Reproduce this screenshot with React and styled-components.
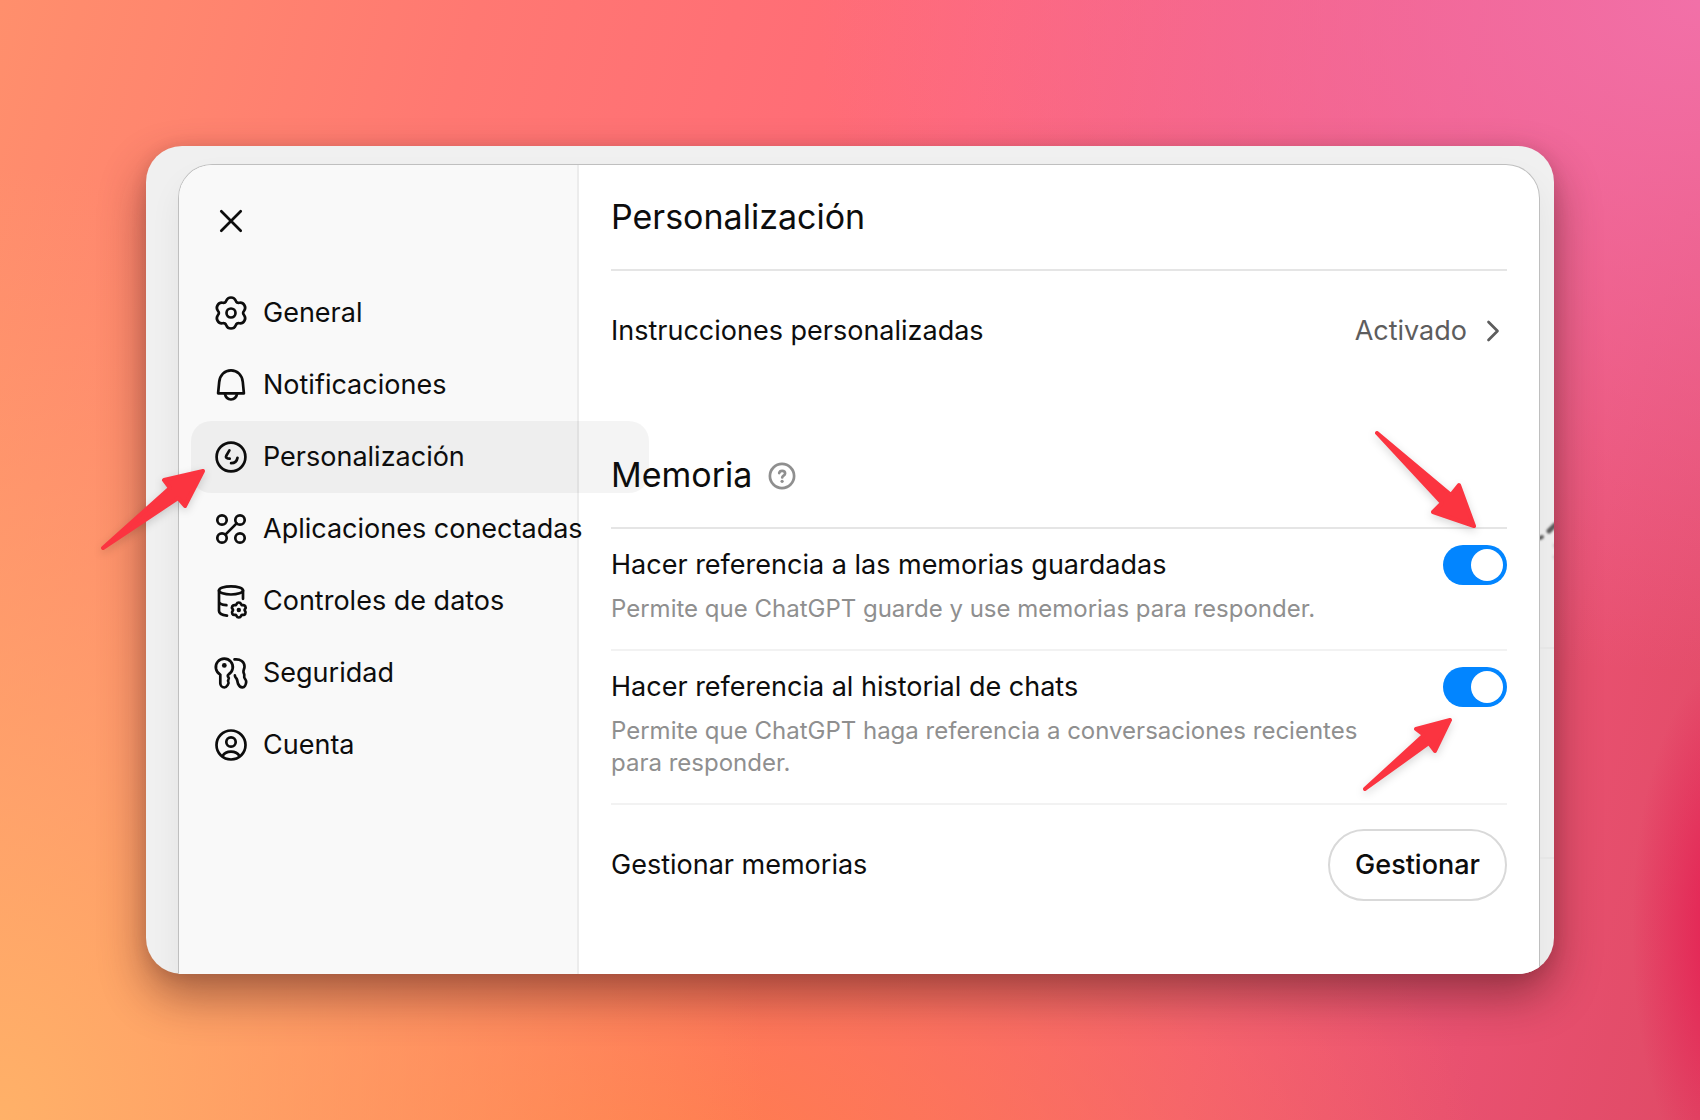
import React, { useState } from 'react';
import styled, { createGlobalStyle } from 'styled-components';

const GlobalStyle = createGlobalStyle`
  * {
    box-sizing: border-box;
  }

  body {
    margin: 0;
    color: #0d0d0d;
    font-family: Inter, 'Liberation Sans', sans-serif;
    font-size: 27px;
    line-height: 40px;
  }

  button {
    font: inherit;
    color: inherit;
    border: none;
    background: none;
    padding: 0;
    cursor: pointer;
  }
`;

const Page = styled.div`
  display: flex;
  min-height: 100vh;
  padding: 146px;
  background:
    radial-gradient(ellipse 6% 24% at 102% 83%, #e5194f 0%, rgba(229, 25, 79, 0) 100%),
    radial-gradient(ellipse 52% 60% at 100% 0%, #f270a8 0%, rgba(242, 112, 168, 0) 100%),
    radial-gradient(ellipse 45% 85% at 0% 100%, #ffb168 0%, rgba(255, 177, 104, 0) 100%),
    radial-gradient(ellipse 50% 50% at 38% 108%, #ff8049 0%, rgba(255, 128, 73, 0) 100%),
    linear-gradient(105deg, #ff8f6c 0%, #ff7872 24%, #ff6878 50%, #f2587a 74%, #e04a66 100%);
`;

const Stage = styled.div`
  position: relative;
  display: flex;
  flex: 1;
  min-width: 0;
`;

const Frame = styled.div`
  display: flex;
  flex: 1;
  min-width: 0;
  padding: 18px 14px 0 32px;
  border-radius: 36px;
  overflow: hidden;
  background: #f0f0f0;
  box-shadow: 0 22px 46px rgba(60, 20, 20, 0.45), 0 2px 16px rgba(60, 20, 20, 0.12);
`;

const Dialog = styled.div`
  display: flex;
  flex: 1;
  min-width: 0;
  border: 1px solid #bfbfbf;
  border-bottom: none;
  border-radius: 34px 34px 0 0;
  background: #fff;
  box-shadow: 0 16px 32px rgba(0, 0, 0, 0.06);
`;

const Sidebar = styled.aside`
  flex: none;
  width: 400px;
  padding-left: 12px;
  border-right: 2px solid #ececec;
  border-top-left-radius: 33px;
  background: #f9f9f9;
`;

const SidebarTop = styled.div`
  display: flex;
  align-items: center;
  height: 112px;
  padding-left: 22px;
`;

const IconButton = styled.button`
  display: flex;
`;

const Nav = styled.nav`
  display: flex;
  flex-direction: column;
`;

// The rows are wider than the sidebar and run on under the panel
const NavItem = styled.button`
  display: flex;
  align-items: center;
  gap: 14px;
  width: calc(100% + 72px);
  height: 72px;
  padding: 0 22px;
  border-radius: 20px;
  white-space: nowrap;
  background: ${({ $active }) => ($active ? 'rgba(0, 0, 0, 0.045)' : 'none')};
`;

const Icon = styled.svg`
  flex: none;
  width: 36px;
  height: 36px;
  fill: none;
  stroke: currentColor;
  stroke-width: 2.7;
  stroke-linecap: round;
  stroke-linejoin: round;

  .dot {
    fill: currentColor;
    stroke: none;
  }
`;

const NarrowIcon = styled(Icon)`
  width: 32px;
`;

const Panel = styled.main`
  flex: 1;
  min-width: 0;
  padding: 0 32px 73px;
`;

const Heading = styled.h2`
  display: flex;
  align-items: center;
  gap: 12px;
  height: 106px;
  margin: 0;
  border-bottom: 2px solid #e5e5e5;
  font-size: 34px;
  font-weight: 400;
`;

const HelpButton = styled(IconButton)`
  color: #8f8f8f;
`;

const LinkRow = styled.div`
  display: flex;
  align-items: center;
  justify-content: space-between;
  height: 120px;
  margin-bottom: 32px;
`;

const ValueButton = styled.button`
  display: flex;
  align-items: center;
  gap: 8px;
  color: #5d5d5d;
`;

const SettingRow = styled.div`
  display: flex;
  align-items: flex-start;
  justify-content: space-between;
  gap: 72px;
  padding: 16px 0 24px;
  border-bottom: 2px solid #f2f2f2;
`;

const SettingTitle = styled.label`
  display: block;
  margin-bottom: 8px;
`;

const Description = styled.p`
  margin: 0;
  color: #8f8f8f;
  font-size: 24px;
  line-height: 32px;
`;

const Switch = styled.input`
  appearance: none;
  flex: none;
  width: 64px;
  height: 40px;
  margin: 0;
  padding: 4px;
  border-radius: 20px;
  background: ${({ checked }) => (checked ? '#0285ff' : '#d0d0d0')};
  cursor: pointer;

  &::before {
    content: '';
    display: block;
    width: 32px;
    height: 32px;
    margin-left: ${({ checked }) => (checked ? '24px' : '0')};
    border-radius: 50%;
    background: #fff;
  }
`;

const ActionRow = styled.div`
  display: flex;
  align-items: center;
  justify-content: space-between;
  padding-top: 24px;
`;

const OutlineButton = styled.button`
  && {
    height: 72px;
    padding: 0 25px;
    border: 2px solid #d9d9d9;
    border-radius: 36px;
    font-weight: 500;
  }
`;

const Arrow = styled.svg`
  position: absolute;
  overflow: visible;
  pointer-events: none;
  fill: #fb3440;
  stroke: #fb3440;
  stroke-width: 4;
  stroke-linejoin: round;
  filter: drop-shadow(0 3px 4px rgba(0, 0, 0, 0.16));
`;

const NavArrow = styled(Arrow)`
  top: 314px;
  left: -54px;
`;

const SavedArrow = styled(Arrow)`
  top: 276px;
  right: 67px;
`;

const HistoryArrow = styled(Arrow)`
  top: 562px;
  right: 91px;
`;

// Blurred sliver of the page that shows at the right of the dialog
const Backdrop = styled.svg`
  position: absolute;
  top: 370px;
  right: 0;
`;

// Closed six-lobed outline, one lobe pointing up
const gearPath = (cx, cy, inner, outer) => {
  const point = (r, deg, t = 0) => {
    const a = (deg * Math.PI) / 180;
    const x = cx + r * Math.sin(a) + t * Math.cos(a);
    const y = cy - r * Math.cos(a) + t * Math.sin(a);
    return `${x.toFixed(2)} ${y.toFixed(2)}`;
  };
  const tip = outer * 0.34;
  const dip = outer * 0.16;
  let path = `M${point(outer, 0)}`;
  for (let deg = 0; deg < 360; deg += 60) {
    path += `C${point(outer, deg, tip)} ${point(inner, deg + 30, -dip)} ${point(inner, deg + 30)}`;
    path += `C${point(inner, deg + 30, dip)} ${point(outer, deg + 60, -tip)} ${point(outer, deg + 60)}`;
  }
  return `${path}Z`;
};

const GearIcon = () => (
  <Icon viewBox="0 0 36 36">
    <path d={gearPath(18, 18, 12.1, 15.5)} />
    <circle cx="18" cy="18" r="4.5" />
  </Icon>
);

const BellIcon = () => (
  <Icon viewBox="0 0 36 36">
    <path d="M5.1 26.3 6.2 15C6.8 8.2 11.6 3.4 18 3.4S29.2 8.2 29.8 15l1.1 11.3Z" />
    <path d="M11.8 26.6c.7 3.6 3 5.9 6.2 5.9s5.5-2.3 6.2-5.9" />
  </Icon>
);

const DialIcon = () => (
  <Icon viewBox="0 0 36 36">
    <circle cx="18" cy="18" r="14.4" />
    <path d="m16.4 11.3-3 5.2c-.9 1.6-.4 2.6 1.3 2.9l2 .3" />
    <path d="M24.5 18.8c-.5 3.2-2.9 5.4-6.4 5.4" />
  </Icon>
);

const AppsIcon = () => (
  <Icon viewBox="0 0 36 36">
    <circle cx="9" cy="9" r="4.7" />
    <circle cx="27" cy="9" r="4.7" />
    <circle cx="9" cy="27" r="4.7" />
    <circle cx="27" cy="27" r="4.7" />
    <path d="m23.6 12.4-11.2 11.2" />
  </Icon>
);

const DataIcon = () => (
  <Icon viewBox="0 0 36 36">
    <ellipse cx="18" cy="7.4" rx="12" ry="4.1" />
    <path d="M6 7.4V28c0 2.4 3.2 4 8 4.6M6 18.4c0 1.8 3 3.2 7.4 3.8M30 7.4v8.4" />
    <path d={gearPath(25.8, 27, 5.8, 7.5)} />
    <circle className="dot" cx="25.8" cy="27" r="2.2" />
  </Icon>
);

const KeysIcon = () => (
  <Icon viewBox="0 0 36 36">
    <path d="M7.3 19.6a8.5 8.5 0 1 1 8.2-.1c-1 .7-.9 1.9-.1 2.7.8.9.7 1.7 0 2.6-.6.8-.5 1.4 0 2.2.7 1-1.5 5.5-4 5.5-2.3 0-4.1-2.2-4.1-4.3Z" />
    <circle className="dot" cx="11.3" cy="10.4" r="2.4" />
    <path d="M21.5 4.4c6-.7 10.1 2.6 10 7.2 0 2.3-1.4 3.6-1 5.6.3 1.6 1.2 2.1.7 4.2-.5 2.2 2.2 3 2 5.5-.2 2.8-1.7 5.600-3.9 5.5-1.9-.1-3.3-1.5-4.2-3.5-.9-2.2-.5-3.500-1.500-5.200-.7-1.100-1.800-1.700-1.700-3.300" />
  </Icon>
);

const AccountIcon = () => (
  <Icon viewBox="0 0 36 36">
    <circle cx="18" cy="18" r="14.5" />
    <circle cx="18" cy="15" r="4.7" />
    <path d="M9.6 29c1.6-2.8 4.6-4.3 8.4-4.3s6.8 1.5 8.4 4.3" />
  </Icon>
);

const CloseIcon = () => (
  <Icon viewBox="0 0 36 36">
    <path d="m8.3 8.3 19.4 19.4M27.7 8.3 8.3 27.7" />
  </Icon>
);

const HelpIcon = () => (
  <Icon viewBox="0 0 36 36">
    <circle cx="18" cy="19" r="12.1" />
    <path d="M15.2 16.1c.3-1.5 1.4-2.3 2.9-2.3 1.7 0 3 1 3 2.6 0 2.1-2.9 2.2-2.9 4" />
    <circle className="dot" cx="18.1" cy="24.3" r="1.6" />
  </Icon>
);

const ChevronIcon = () => (
  <NarrowIcon viewBox="0 0 32 36">
    <path d="m13.5 9 9 9-9 9" />
  </NarrowIcon>
);

const navItems = [
  { label: 'General', icon: GearIcon },
  { label: 'Notificaciones', icon: BellIcon },
  { label: 'Personalización', icon: DialIcon },
  { label: 'Aplicaciones conectadas', icon: AppsIcon },
  { label: 'Controles de datos', icon: DataIcon },
  { label: 'Seguridad', icon: KeysIcon },
  { label: 'Cuenta', icon: AccountIcon },
];

const Setting = ({ id, title, description }) => {
  const [on, setOn] = useState(true);

  return (
    <SettingRow>
      <div>
        <SettingTitle htmlFor={id}>{title}</SettingTitle>
        <Description id={`${id}-info`}>{description}</Description>
      </div>
      <Switch
        id={id}
        type="checkbox"
        role="switch"
        aria-describedby={`${id}-info`}
        checked={on}
        onChange={(e) => setOn(e.target.checked)}
      />
    </SettingRow>
  );
};

const App = () => {
  const [active, setActive] = useState('Personalización');

  return (
    <Page>
      <GlobalStyle />
      <Stage>
        <Frame>
          <Dialog role="dialog" aria-label="Personalización">
            <Sidebar>
              <SidebarTop>
                <IconButton aria-label="Cerrar">
                  <CloseIcon />
                </IconButton>
              </SidebarTop>
              <Nav>
                {navItems.map(({ label, icon: ItemIcon }) => (
                  <NavItem key={label} $active={label === active} onClick={() => setActive(label)}>
                    <ItemIcon />
                    {label}
                  </NavItem>
                ))}
              </Nav>
            </Sidebar>
            <Panel>
              <Heading>Personalización</Heading>
              <LinkRow>
                <span>Instrucciones personalizadas</span>
                <ValueButton>
                  Activado
                  <ChevronIcon />
                </ValueButton>
              </LinkRow>
              <Heading>
                Memoria
                <HelpButton aria-label="Ayuda">
                  <HelpIcon />
                </HelpButton>
              </Heading>
              <Setting
                id="saved"
                title="Hacer referencia a las memorias guardadas"
                description="Permite que ChatGPT guarde y use memorias para responder."
              />
              <Setting
                id="history"
                title="Hacer referencia al historial de chats"
                description="Permite que ChatGPT haga referencia a conversaciones recientes para responder."
              />
              <ActionRow>
                <span>Gestionar memorias</span>
                <OutlineButton>Gestionar</OutlineButton>
              </ActionRow>
            </Panel>
          </Dialog>
        </Frame>
        <Backdrop width="14" height="350" viewBox="0 0 14 350" aria-hidden="true">
          <g filter="url(#soften)" stroke="#5a5a5a" strokeLinecap="round">
            <path d="m0 22 2-1" strokeWidth="4" />
            <path d="m9 15 6-6" strokeWidth="5" />
            <path d="M14 28v3M14 40v2" strokeWidth="1" opacity="0.5" />
          </g>
          <path d="M0 132h14M0 342h14" stroke="#e6e6e6" strokeWidth="2" />
          <defs>
            <filter id="soften" x="-50%" y="-50%" width="200%" height="200%">
              <feGaussianBlur stdDeviation="1.2" />
            </filter>
          </defs>
        </Backdrop>
        <NavArrow width="124" height="100" aria-hidden="true">
          <path d="M11 88 78 28 72 20 111 11 93 46 86 38Z" />
        </NavArrow>
        <SavedArrow width="120" height="116" aria-hidden="true">
          <path d="M10 11 84 73 92 63 107 104 66 90 75 81Z" />
        </SavedArrow>
        <HistoryArrow width="108" height="92" aria-hidden="true">
          <path d="M10 81 69 27 61 21 95 12 80 43 74 35Z" />
        </HistoryArrow>
      </Stage>
    </Page>
  );
};

export default App;
